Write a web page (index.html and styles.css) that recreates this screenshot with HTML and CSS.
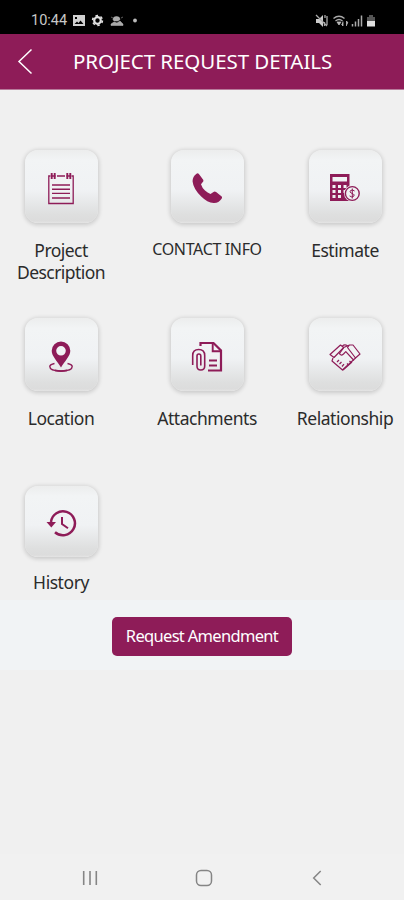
FILE: index.html
```html
<!DOCTYPE html>
<html lang="en">
<head>
<meta charset="utf-8">
<title>Project Request Details</title>
<link rel="stylesheet" href="styles.css">
</head>
<body>
<div class="status">
  <span class="clock">10:44</span>
  <svg class="notifications" width="66" height="14" viewBox="0 0 66 14">
    <path fill="#d0d0d0" fill-rule="evenodd" d="M1 1h12v11H1zM2.500 10h9L8.500 6.500 6.500 9 5 7.500zM3 3v2h2V3z"/>
    <circle cx="25.500" cy="6.500" r="3.300" fill="none" stroke="#e0e0e0" stroke-width="2.200"/>
    <circle cx="25.500" cy="6.500" r="4.900" fill="none" stroke="#e0e0e0" stroke-width="1.600" stroke-dasharray="2.560 2.560"/>
    <path d="M39 11.500v-1.500l3-2 3 1 3-2 3 3v1.500zM41 5.500a3.500 3 0 0 1 7 0l-2 1.500h-4zM39 3l2 1M49 4l2-1" fill="#aaa" stroke="#bbb" stroke-width=".5"/>
    <circle cx="63" cy="6.500" r="1.900" fill="#bbb"/>
  </svg>
  <svg class="signals" width="62" height="14" viewBox="0 0 62 14">
    <path d="M1 5h3l4-4v12L4 9H1z" fill="#ccc"/>
    <path d="M1 1l11 11M10 1v3M12 2v9M9.500 8v4" stroke="#aaa" stroke-width="1.300" fill="none"/>
    <path d="M18.500 4.500q5.500-4.500 11 0M20.500 7q3.500-3 7 0" stroke="#aaa" stroke-width="1.400" fill="none"/>
    <path d="M22 8h4l-2 3zM28 7.500v4.500l-1.500-1.500M31.500 12V7l1.500 2" fill="#bbb" stroke="#bbb" stroke-width=".8"/>
    <path d="M37.500 12.500V10M40.500 12.500V7.500M43.500 12.500V5M46.500 12.500V1.500" stroke="#aaa" stroke-width="1.500"/>
    <path d="M52 3h2V1h4v2h2v4h-8z" fill="#555"/><path d="M52 7h8v5.500h-8z" fill="#e0e0e0"/>
  </svg>
</div>
<header class="bar">
  <svg class="back" width="16" height="27" viewBox="0 0 16 27"><path d="M14.500 1.500L2 13.500l12.500 12" fill="none" stroke="#fff" stroke-width="1.500"/></svg>
  <h1>PROJECT REQUEST DETAILS</h1>
</header>
<main class="grid">
  <div class="item">
    <div class="tile"><svg width="32" height="32" viewBox="0 0 32 32" fill="none" stroke="#8e1c58">
      <path d="M5 3H3.800V30.500H28.200V3H27M12 3h8" stroke-width="1.300"/>
      <path d="M6.700 0v6M9.700 0v6M22.300 0v6M25.300 0v6" stroke-width="1.900"/>
      <path d="M5.500 3h5M21.500 3h5" stroke-width="1.500"/>
      <path d="M7 12h18M7 16.200h18M7 20.400h18M7 25h18" stroke-width="1.400"/></svg></div>
    <span class="label desc">Project<br>Description</span>
  </div>
  <div class="item">
    <div class="tile"><svg width="32" height="32" viewBox="0 0 32 32"><path fill="#8e1c58" d="M5.500.700Q6.800-.300 7.900 1L12 6.500q.9 1.300-.2 2.500L10 11.300q1 3.500 4 6.300 2.500 2.300 5.500 3.300l3-2q1.300-.8 2.600.2l5.300 4.200q1.200 1.100.200 2.500-3 4.500-8 4.200-6.300-.5-12.400-6.500Q2.300 15.800 1.600 8.500 1.400 3.500 5.500.700z"/></svg></div>
    <span class="label caps">CONTACT INFO</span>
  </div>
  <div class="item">
    <div class="tile"><svg width="32" height="32" viewBox="0 0 32 32">
      <path fill="#8e1c58" fill-rule="evenodd" d="M1 1H20.500v27H1zM3.500 4v4.500H18V4zM3.500 12v3h3v-3zM9 12v3h3v-3zM14.500 12v3h3v-3zM3.500 17v3h3v-3zM9 17v3h3v-3zM14.500 17v3h3v-3zM3.500 22v3h3v-3zM9 22v3h3v-3z"/>
      <circle cx="23.300" cy="20.500" r="8.200" fill="#eff1f2"/>
      <circle cx="23.300" cy="20.500" r="6.900" fill="none" stroke="#8e1c58" stroke-width="1.400"/>
      <path d="M25.600 18q-2-1.700-4-.5-1.400 1.500.5 2.500l2 .8q2 1 .5 2.600-2 1.200-4-.5M23.300 15.500v10" fill="none" stroke="#8e1c58" stroke-width="1"/></svg></div>
    <span class="label">Estimate</span>
  </div>
  <div class="item">
    <div class="tile"><svg width="32" height="32" viewBox="0 0 32 32">
      <path d="M9.500 22.500Q4.800 23.500 4.800 25.500C4.800 28.500 9.500 30 16 30s11.200-1.500 11.200-4.500q0-2-4.700-3" fill="none" stroke="#8e1c58" stroke-width="1.400"/>
      <path d="M10 29.300q6 1.500 12 0" fill="none" stroke="#8e1c58" stroke-width="1.800"/>
      <path fill="#8e1c58" fill-rule="evenodd" d="M16 .5a9.300 9.300 0 0 1 9.300 9.300C25.300 15 20 20 16 26.500 12 20 6.700 15 6.700 9.800A9.300 9.300 0 0 1 16 .5zM16 5a4.800 4.800 0 1 0 0 9.600A4.800 4.800 0 1 0 16 5z"/></svg></div>
    <span class="label">Location</span>
  </div>
  <div class="item">
    <div class="tile"><svg width="32" height="32" viewBox="0 0 32 32" fill="none" stroke="#8e1c58">
      <path d="M9.500 5V2H22.500l7.500 7.500V29.500H17" stroke-width="2.200"/>
      <path d="M21.700 2v8.200h8.200" stroke-width="1.900"/>
      <path d="M18 19.500h8M18 24.500h8" stroke-width="1.900"/>
      <path d="M1.700 24V14.500q0-6 6-6t6 6v10.500q0 4-3.900 4T6 25V15q0-2 1.900-2t1.900 2v9.500" stroke-width="1.600"/></svg></div>
    <span class="label">Attachments</span>
  </div>
  <div class="item">
    <div class="tile"><svg width="32" height="32" viewBox="0 0 32 32" fill="none" stroke="#8e1c58" stroke-width="1.200" stroke-linejoin="round">
      <path d="M1 13.500L11.500 4l3.200 2.500L5 16.500zM20.500 4h3.500l7 9-4.500 4-8-10.500zM14.700 6.500l5.800-2.500M13.500 5q2-2 5-.3"/>
      <path d="M14.500 7l-4 5.500q1.200 2.800 4 .5l2.300-2.300L25 19.500M4 17l-1 3L13.500 29l13-12"/>
      <path d="M8 21l2-2M10.500 23l2-2M13 25.500l2-2.300M14 29l9-8M18 22.500l2 2M20.500 20l2 2"/></svg></div>
    <span class="label">Relationship</span>
  </div>
  <div class="item">
    <div class="tile short"><svg width="32" height="32" viewBox="0 0 32 32" fill="none" stroke="#8e1c58">
      <path d="M6 14A12 12 0 1 1 10 24.300" stroke-width="2.500"/>
      <path d="M1.500 14h9.500l-4.700 5.500z" fill="#8e1c58" stroke="none"/>
      <path d="M17 9v7l6 4.200" stroke-width="2"/></svg></div>
    <span class="label last">History</span>
  </div>
</main>
<div class="actions"><button class="amend">Request Amendment</button></div>
<nav class="nav">
  <svg width="16" height="16" viewBox="0 0 16 16"><path d="M1.700 1v14M8 1v14M14.300 1v14" stroke="#858585" stroke-width="1.600"/></svg>
  <svg class="home" width="18" height="18" viewBox="0 0 18 18"><rect x="1.500" y="1.500" width="15" height="15" rx="4.500" fill="none" stroke="#858585" stroke-width="1.500"/></svg>
  <svg width="10" height="16" viewBox="0 0 10 16"><path d="M8.700 1L1.700 8l7 7" fill="none" stroke="#858585" stroke-width="1.500"/></svg>
</nav>
</body>
</html>
```
FILE: styles.css
```css
* { box-sizing: border-box; }
body {
  margin: 0;
  height: 900px;
  display: flex;
  flex-direction: column;
  background: #f0f0f0;
  font-family: "Noto Sans", sans-serif;
  color: #2b2b2b;
  overflow: hidden;
}
svg { display: block; flex: none; }
.status {
  height: 34px;
  background: #000;
  display: flex;
  align-items: center;
  padding: 8px 27px 0 31px;
}
.clock {
  width: 41px;
  font: 14.500px/18px Roboto, sans-serif;
  color: #c8c8c8;
  white-space: nowrap;
}
.signals { margin-left: auto; }
.bar {
  height: 56px;
  background: #8e1c58;
  border-bottom: 1px solid #b77b9b;
  display: flex;
  align-items: center;
  padding-left: 17px;
}
h1 {
  margin: 0 0 1px 40px;
  font-size: 20.5px;
  line-height: 26px;
  font-weight: 400;
  color: #fff;
  white-space: nowrap;
  letter-spacing: -0.07px;
}
.grid {
  height: 510px;
  padding-top: 60px;
  display: grid;
  grid-template-columns: 122px 170px 106px;
  grid-template-rows: 168px 168px 110px;
}
.item {
  display: flex;
  flex-direction: column;
  align-items: center;
}
.tile {
  width: 73px;
  height: 73px;
  border-radius: 13px;
  display: flex;
  align-items: center;
  justify-content: center;
  padding-top: 5px;
  background: linear-gradient(#eceded 0, #f2f4f5 14%, #f0f2f4 55%, #dedfdf 88%, #dcdcdc 97%, #e4e4e4 100%);
  box-shadow: 0 1px 4px 1px rgba(0, 0, 0, .16);
}
.tile.short { height: 71px; }
.label {
  margin-top: 16px;
  font-size: 17.5px;
  line-height: 22px;
  text-align: center;
  white-space: nowrap;
  letter-spacing: -0.45px;
}
.desc { letter-spacing: -0.55px; }
.last { margin-top: 14px; }
.caps {
  font-size: 16px;
  line-height: 20px;
  letter-spacing: -0.35px;
}
.actions {
  height: 70px;
  background: #f1f3f5;
  display: flex;
  justify-content: center;
  align-items: center;
}
.amend {
  width: 180px;
  height: 39px;
  margin-top: 3px;
  padding: 0 0 2px;
  border: 0;
  border-radius: 5px;
  background: #8e1c58;
  color: #fff;
  font-family: inherit;
  font-size: 16.5px;
  letter-spacing: -0.68px;
  white-space: nowrap;
}
.nav {
  margin-top: auto;
  height: 46px;
  background: #f1f1f1;
  display: flex;
  align-items: center;
  justify-content: space-between;
  padding: 2px 82px 0;
}
.home { margin-right: 3px; }
```
